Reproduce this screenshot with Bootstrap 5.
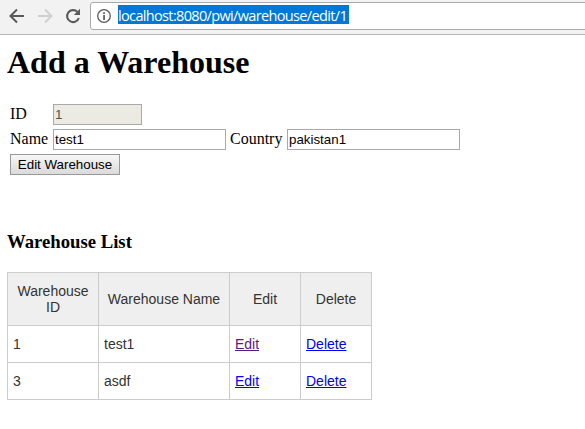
<!DOCTYPE html>
<html lang="en">
<head>
<meta charset="utf-8">
<meta name="viewport" content="width=device-width, initial-scale=1">
<title>Add a Warehouse</title>
<link href="https://cdn.jsdelivr.net/npm/bootstrap@5.3.0/dist/css/bootstrap.min.css" rel="stylesheet">
<style>
body{font-family:"Liberation Serif",serif;font-size:16px;line-height:18px;color:#000;background:#fff}
.browser-bar{height:35px;background:#f2f2f2;border-bottom:1px solid #b5b5b5;padding:2px 0 4px 9px}
.browser-bar svg{flex:none;display:block}
.browser-bar .forward{margin:0 12px}
.address{height:28px;margin-left:9px;margin-right:-6px;background:#fff;border:1px solid #a9a9a9;border-radius:3px;padding-left:5px}
.selected-url{font-family:"Open Sans",sans-serif;font-size:14.5px;letter-spacing:-.65px;line-height:21px;height:19px;width:231px;margin:0 0 3px 6px;background:#0078d7;color:#fff;white-space:nowrap}
.page-main{padding:9px 7px 0}
h1{font-size:32px;font-weight:700;line-height:36px}
h3{font-size:18.72px;font-weight:700;line-height:22px}
.entry-form{margin-top:24px;padding-left:3px;gap:4px}
.entry-line{height:21px}
.entry-line label{width:43px;padding-bottom:1px}
.entry-line label.country{width:57px;margin-left:4px}
.entry-line input{box-sizing:border-box;width:173px;height:21px;padding:1px;border:1px solid #a9a9a9;border-radius:0;font:13.333px "Liberation Sans",Arial,sans-serif;color:#000;background:#fff;outline:0}
.entry-line input:disabled{width:89px;background:#ebebe4;color:#545454}
.submit{width:110px;height:21px;padding:0;border:1px solid #999;border-radius:0;background:linear-gradient(#f7f7f7,#dadada);font:13.333px "Liberation Sans",Arial,sans-serif;color:#000}
.list-title{margin-top:56px}
.warehouses{width:365px;margin-top:19px;table-layout:fixed;border-collapse:collapse;font:14px/16px "Liberation Sans",Arial,sans-serif;color:#333}
.warehouses th,.warehouses td{border:1px solid #ccc;padding:0 5px}
.warehouses th{height:53px;background:#efefef;font-weight:400}
.warehouses td{height:37px}
.warehouses .col-id{width:91px}
.warehouses .col-name{width:131px}
.warehouses .col-action{width:71px}
.warehouses a{color:#00e}
.warehouses a.seen{color:#551a8b}
</style>
<script src="https://cdn.jsdelivr.net/npm/bootstrap@5.3.0/dist/js/bootstrap.bundle.min.js" defer></script>
</head>
<body class="overflow-hidden">
<header class="browser-bar d-flex align-items-center overflow-hidden">
  <svg width="16" height="16" viewBox="0 0 16 16" fill="none" stroke="#5a5a5a" stroke-width="2"><path d="M15 8H2.500M8 1.500 1.500 8 8 14.500"/></svg>
  <svg class="forward" width="16" height="16" viewBox="0 0 16 16" fill="none" stroke="#d0d0d0" stroke-width="2"><path d="M1 8h12.500M8 1.500 14.500 8 8 14.500"/></svg>
  <svg width="16" height="16" viewBox="0 0 16 16"><path d="M13.800 10A6 6 0 1 1 12.300 3.800" fill="none" stroke="#5a5a5a" stroke-width="2.100"/><path d="M15 .8V7H8.800z" fill="#5a5a5a"/></svg>
  <div class="address d-flex align-items-center flex-grow-1">
    <svg width="16" height="16" viewBox="0 0 16 16"><circle cx="8" cy="8" r="6.300" fill="none" stroke="#5a5a5a" stroke-width="1.300"/><path d="M7.200 4.300h1.700V6H7.200zM7.200 7h1.700v5H7.200z" fill="#5a5a5a"/></svg>
    <span class="selected-url">localhost:8080/pwi/warehouse/edit/1</span>
  </div>
</header>
<main class="page-main">
  <h1 class="mb-0">Add a Warehouse</h1>
  <form class="entry-form d-flex flex-column align-items-start">
    <div class="entry-line d-flex align-items-center"><label for="wid">ID</label><input id="wid" value="1" disabled></div>
    <div class="entry-line d-flex align-items-center"><label for="wname">Name</label><input id="wname" value="test1"><label class="country" for="wcountry">Country</label><input id="wcountry" value="pakistan1"></div>
    <button class="submit" type="button">Edit Warehouse</button>
  </form>
  <h3 class="list-title mb-0">Warehouse List</h3>
  <table class="warehouses">
    <colgroup><col class="col-id"><col class="col-name"><col class="col-action"><col class="col-action"></colgroup>
    <thead><tr class="text-center align-middle"><th>Warehouse ID</th><th>Warehouse Name</th><th>Edit</th><th>Delete</th></tr></thead>
    <tbody>
      <tr class="align-middle"><td>1</td><td>test1</td><td><a class="seen" href="#">Edit</a></td><td><a href="#">Delete</a></td></tr>
      <tr class="align-middle"><td>3</td><td>asdf</td><td><a href="#">Edit</a></td><td><a href="#">Delete</a></td></tr>
    </tbody>
  </table>
</main>
</body>
</html>
